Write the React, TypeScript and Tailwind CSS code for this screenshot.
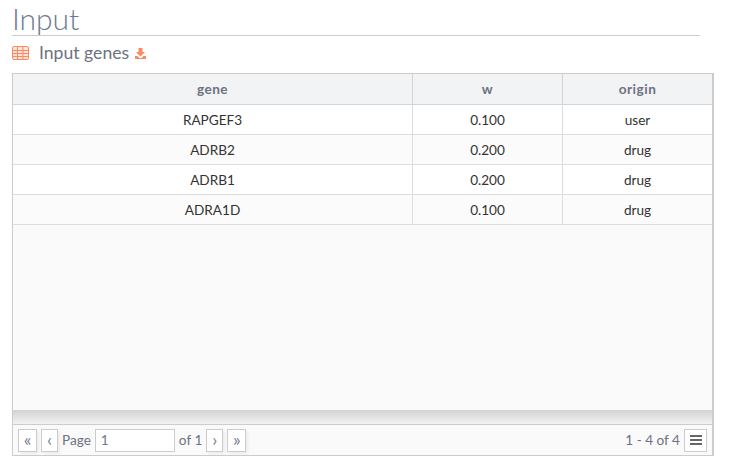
import React from "react";

const rows = [
  ["RAPGEF3", "0.100", "user"],
  ["ADRB2", "0.200", "drug"],
  ["ADRB1", "0.200", "drug"],
  ["ADRA1D", "0.100", "drug"],
];

function Btn({ children, w }: { children: React.ReactNode; w: string }) {
  return (
    <button className={`${w} h-[23px] flex items-center justify-center border border-[#cccccc] bg-white text-[#7a7f8c] shadow-[2px_2px_3px_rgba(0,0,0,0.06)]`}>
      {children}
    </button>
  );
}

export default function App() {
  return (
    <div className="w-[732px] h-[470px] bg-white overflow-hidden pl-[12px] font-['Lato','Liberation_Sans',sans-serif] text-[#333]">
      <h1 className="w-[688px] h-[36px] border-b border-[#cccccc] text-[30px] leading-[36px] font-light text-[#6f7a90]">Input</h1>
      <div className="flex items-center h-[34px] text-[#6d7280] text-[17.6px]">
        <svg width="17" height="14" viewBox="0 0 17 14" className="mr-[10px] -mt-[1px]">
          <rect x="0.5" y="0.5" width="16" height="13" rx="1.5" fill="#fee4d9" stroke="#fb8a64" />
          <path d="M0 4.5H17M0 7.5H17M0 10.5H17M5.5 0V14M11 0V14" stroke="#fb8a64" strokeWidth="1" />
        </svg>
        <span>Input genes</span>
        <svg width="13" height="13" viewBox="0 0 13 13" className="ml-[5px]">
          <path d="M4.5 1H8.5V5H11L6.5 9.5L2 5H4.5Z" fill="#fb8a64" />
          <path d="M1 9H3.5L5.5 11H7.5L9.5 9H12V12H1Z" fill="#fb8a64" />
        </svg>
      </div>
      <div className="w-[702px] h-[383px] mt-[3px] border border-[#cccccc] border-r-2 flex flex-col bg-[#fafafa] text-[13.6px]">
        <div className="flex h-[31px] bg-[#f2f3f5] border-b border-[#d4d4d4] font-bold text-[#6d7280] tracking-[0.5px] shrink-0">
          <div className="w-[400px] border-r border-[#d4d4d4] flex items-center justify-center">gene</div>
          <div className="w-[150px] border-r border-[#d4d4d4] flex items-center justify-center">w</div>
          <div className="flex-1 flex items-center justify-center">origin</div>
        </div>
        {rows.map((r, i) => (
          <div key={r[0]} className={`flex h-[30px] shrink-0 border-b border-[#dddddd] text-[#333] ${i % 2 ? "bg-[#fbfbfb]" : "bg-white"}`}>
            <div className="w-[400px] border-r border-[#dddddd] pt-[2px] flex items-center justify-center">{r[0]}</div>
            <div className="w-[150px] border-r border-[#dddddd] pt-[2px] flex items-center justify-center">{r[1]}</div>
            <div className="flex-1 pt-[2px] flex items-center justify-center">{r[2]}</div>
          </div>
        ))}
        <div className="flex-1" />
        <div className="h-[14px] shrink-0 bg-gradient-to-b from-[#d2d2d2] to-[#f2f2f2]" />
        <div className="h-[31px] shrink-0 border-t border-[#cccccc] bg-[#fafafa] flex items-center pl-[5px] pr-[5px] text-[#6d7280] text-[13.6px]">
          <Btn w="w-[19px] mr-[4px]"><span className="text-[18px] leading-none -mt-[3px]">«</span></Btn>
          <Btn w="w-[17px] mr-[4px]"><span className="text-[18px] leading-none -mt-[3px]">‹</span></Btn>
          <span className="mr-[4px]">Page</span>
          <div className="w-[80px] h-[23px] border border-[#cccccc] bg-white pl-[5px] flex items-center mr-[4px] text-[#6f7a90]">1</div>
          <span className="mr-[4px]">of 1</span>
          <Btn w="w-[17px] mr-[4px]"><span className="text-[18px] leading-none -mt-[3px]">›</span></Btn>
          <Btn w="w-[19px]"><span className="text-[18px] leading-none -mt-[3px]">»</span></Btn>
          <span className="ml-auto mr-[4px]">1 - 4 of 4</span>
          <button className="w-[23px] h-[23px] border border-[#cccccc] bg-white flex items-center justify-center">
            <svg width="12" height="10" viewBox="0 0 12 10"><path d="M0 0H12V2H0ZM0 4H12V6H0ZM0 8H12V10H0Z" fill="#666" /></svg>
          </button>
        </div>
      </div>
    </div>
  );
}
